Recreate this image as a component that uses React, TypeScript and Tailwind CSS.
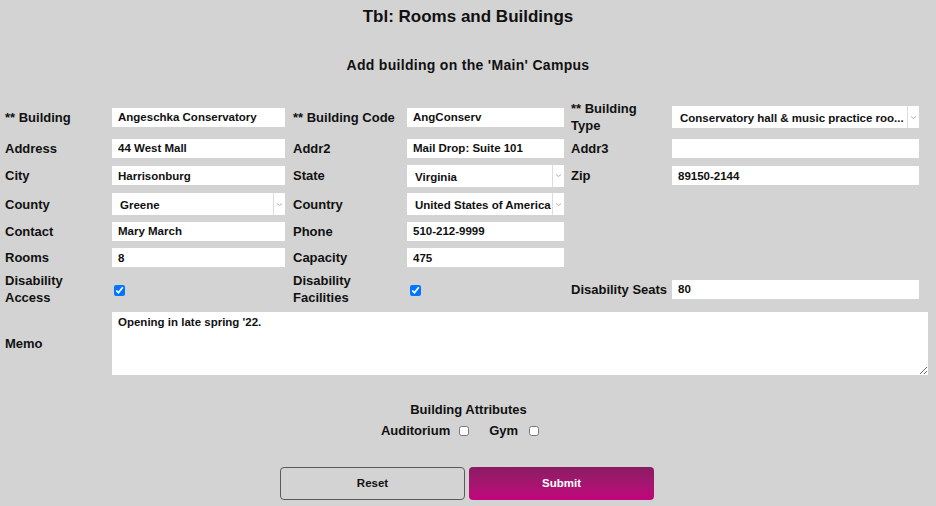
import React from 'react'

const label = 'text-[13px] font-bold leading-[17px] text-[#111]'
const field = 'h-[19px] bg-white px-[6px] text-[11.5px] font-bold text-[#111] outline-none font-["Liberation_Sans",Arial,sans-serif]'

function Label({ children }: { children: React.ReactNode }) {
  return <div className={label}>{children}</div>
}

function Field({ value, w }: { value: string; w: string }) {
  return <input readOnly value={value} className={`${field} ${w}`} />
}

function Select({ value, w }: { value: string; w: string }) {
  return (
    <div className={`flex h-[22px] bg-white ${w}`}>
      <div className="flex-1 min-w-0 overflow-hidden whitespace-nowrap pl-[8px] pt-[5px] text-[11.5px] font-bold text-[#111] leading-[14px]">
        {value}
      </div>
      <div className="flex w-[12px] shrink-0 items-center justify-center border-l border-[#dcdcdc]">
        <svg width="7" height="5" viewBox="0 0 7 5">
          <path d="M1 1.5 L3.5 3.5 L6 1.5" fill="none" stroke="#b0b0b0" strokeWidth="1" />
        </svg>
      </div>
    </div>
  )
}

function Check({ checked }: { checked?: boolean }) {
  return <input type="checkbox" readOnly checked={!!checked} className="m-0 h-[11px] w-[11px]" />
}

export default function App() {
  return (
    <div className="min-h-[506px] w-[936px] bg-[#d3d3d3] font-['Liberation_Sans',Arial,sans-serif] text-[#111]">
      <h1 className="pt-[6px] text-center text-[17px] font-bold leading-[22px]">Tbl: Rooms and Buildings</h1>
      <h2 className="mt-[28px] text-center text-[14px] font-bold leading-[18px] tracking-[0.3px]">
        Add building on the 'Main' Campus
      </h2>

      {/* Main form grid */}
      <div className="mt-[26px] grid grid-cols-[107px_181px_114px_164px_101px_247px] grid-rows-[34px_28px_27px_30px_24px_29px_34px] items-center pl-[5px]">
        <Label>** Building</Label>
        <Field value="Angeschka Conservatory" w="w-[173px]" />
        <Label>** Building Code</Label>
        <Field value="AngConserv" w="w-[157px]" />
        <Label>
          ** Building
          <br />
          Type
        </Label>
        <Select value="Conservatory hall & music practice roo..." w="w-[247px]" />

        <Label>Address</Label>
        <Field value="44 West Mall" w="w-[173px]" />
        <Label>Addr2</Label>
        <Field value="Mail Drop: Suite 101" w="w-[157px]" />
        <Label>Addr3</Label>
        <Field value="" w="w-[247px]" />

        <Label>City</Label>
        <Field value="Harrisonburg" w="w-[173px]" />
        <Label>State</Label>
        <Select value="Virginia" w="w-[157px]" />
        <Label>Zip</Label>
        <Field value="89150-2144" w="w-[247px]" />

        <Label>County</Label>
        <Select value="Greene" w="w-[173px]" />
        <Label>Country</Label>
        <Select value="United States of America" w="w-[157px]" />
        <div />
        <div />

        <Label>Contact</Label>
        <Field value="Mary March" w="w-[173px]" />
        <Label>Phone</Label>
        <Field value="510-212-9999" w="w-[157px]" />
        <div />
        <div />

        <Label>Rooms</Label>
        <Field value="8" w="w-[173px]" />
        <Label>Capacity</Label>
        <Field value="475" w="w-[157px]" />
        <div />
        <div />

        <Label>
          Disability
          <br />
          Access
        </Label>
        <div className="flex pl-[2px] pt-[2px]">
          <Check checked />
        </div>
        <Label>
          Disability
          <br />
          Facilities
        </Label>
        <div className="flex pl-[3px] pt-[2px]">
          <Check checked />
        </div>
        <Label>Disability Seats</Label>
        <Field value="80" w="w-[247px]" />
      </div>

      {/* Memo */}
      <div className="mt-[6px] flex items-center pl-[5px]">
        <div className={`${label} w-[107px]`}>Memo</div>
        <textarea
          readOnly
          value="Opening in late spring '22."
          className="block h-[63px] w-[816px] bg-white px-[6px] pt-[3px] text-[11.5px] font-bold leading-[14px] text-[#111] outline-none"
        />
      </div>

      {/* Attributes */}
      <div className="mt-[26px] flex flex-col items-center">
        <div className="text-[13px] font-bold leading-[17px] pl-[1px]">Building Attributes</div>
        <div className="mt-[4px] flex items-center pr-[16px] text-[13px] font-bold leading-[17px]">
          <span>Auditorium</span>
          <span className="ml-[9px] flex">
            <input type="checkbox" readOnly className="m-0 h-[10px] w-[10px]" />
          </span>
          <span className="ml-[20px]">Gym</span>
          <span className="ml-[11px] flex">
            <input type="checkbox" readOnly className="m-0 h-[10px] w-[10px]" />
          </span>
        </div>
      </div>

      {/* Buttons */}
      <div className="mt-[28px] flex justify-center gap-[4px] pr-[2px]">
        <button className="h-[33px] w-[185px] rounded-[4px] border border-[#5a5a5a] bg-transparent text-[11.5px] font-bold text-[#111]">
          Reset
        </button>
        <button className="h-[33px] w-[185px] rounded-[4px] bg-gradient-to-b from-[#8a1b62] to-[#c2037d] text-[11.5px] font-bold text-white">
          Submit
        </button>
      </div>
    </div>
  )
}
